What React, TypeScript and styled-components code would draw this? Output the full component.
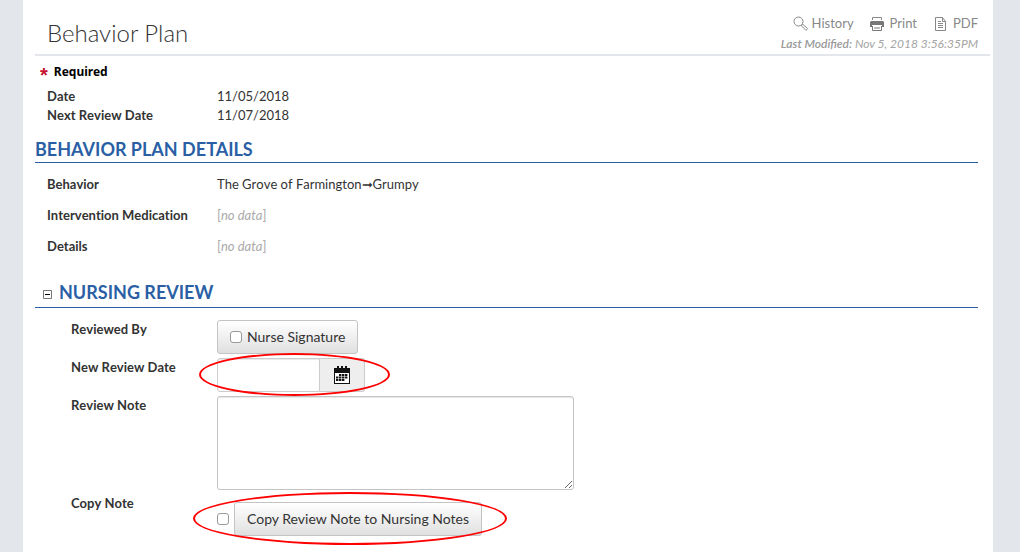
import React from "react";
import styled, { createGlobalStyle } from "styled-components";

const GlobalStyle = createGlobalStyle`
  * { box-sizing: border-box; }
  body {
    margin: 0;
    background: #e3e6eb;
    color: #333;
    font: 13px/19px Lato, "Liberation Sans", sans-serif;
  }
`;

const Page = styled.main`
  margin: 0 27px 0 23px;
  padding: 0 3px 0 12px;
  min-height: 100vh;
  background: #fff;
`;

const Header = styled.header`
  display: flex;
  justify-content: space-between;
  padding: 14px 12px 0;
  border-bottom: 2px solid #e3e6eb;
`;

const Title = styled.h1`
  margin: 0;
  font-size: 24px;
  font-weight: 300;
  line-height: 38px;
`;

const Tools = styled.div`
  display: flex;
  flex-direction: column;
  align-items: flex-end;
  color: #a4a4a4;
`;

const ToolRow = styled.nav`
  display: flex;
  gap: 16px;
`;

const ToolLink = styled.a`
  display: flex;
  align-items: center;
  gap: 4px;
  color: #888;
  text-decoration: none;
  svg { display: block; }
`;

const Modified = styled.div`
  font-size: 12px;
  font-style: italic;
  line-height: 21px;
  b { color: #999; font-weight: 600; }
`;

const Content = styled.div`
  padding-right: 12px;
`;

const Required = styled.p`
  display: flex;
  gap: 6px;
  margin: 0;
  padding: 6px 0 5px 5px;
  color: #000;
  font: bold 12px/20px "Noto Sans", sans-serif;
`;

const Star = styled.span`
  height: 20px;
  color: #c41230;
  font: bold 20px/26px "Liberation Sans", sans-serif;
`;

const List = styled.dl<{ $gap: number }>`
  display: flex;
  flex-direction: column;
  gap: ${(p) => p.$gap}px;
  margin: 0;
  padding-left: 12px;
  font-kerning: none;
  font-variant-ligatures: none;
`;

const Item = styled.div`
  display: flex;
`;

const Term = styled.dt`
  width: 170px;
  font-weight: 700;
`;

const Value = styled.dd`
  margin: 0;
`;

const NoData = styled.span`
  color: #aaa;
`;

const SectionTitle = styled.h2<{ $top: number; $bottom: number }>`
  display: flex;
  align-items: center;
  gap: 7px;
  margin: ${(p) => p.$top}px 0 12px;
  padding-bottom: ${(p) => p.$bottom}px;
  border-bottom: 1px solid #2a5fa5;
  color: #2a5fa5;
  font-size: 18px;
  font-weight: 700;
  line-height: 26px;
  text-transform: uppercase;
`;

const Toggle = styled.button`
  display: flex;
  margin: 4px 0 0 8px;
  padding: 0;
  border: 0;
  background: none;
`;

const Form = styled.form`
  display: flex;
  flex-direction: column;
  gap: 4px;
  padding-left: 36px;
`;

const Field = styled.div`
  display: flex;
  align-items: flex-start;
`;

const FieldLabel = styled.label`
  width: 146px;
  font-weight: 700;
  font-kerning: none;
`;

const Check = styled.input`
  appearance: none;
  width: 12px;
  height: 12px;
  margin: 0;
  border: 1px solid #999;
  border-radius: 3px;
  background: #fff;
`;

const buttonLook = `
  display: flex;
  align-items: center;
  gap: 5px;
  height: 34px;
  padding: 0 12px;
  border: 1px solid #c4c4c4;
  border-radius: 3px;
  background: linear-gradient(#fff, #e0e0e0);
  color: #333;
  font: 14px/20px Lato, "Liberation Sans", sans-serif;
`;

const CheckButton = styled.label`${buttonLook}`;
const PushButton = styled.button`${buttonLook}`;

const Marked = styled.div<{ $top?: number }>`
  position: relative;
  display: flex;
  align-items: center;
  margin-top: ${(p) => p.$top ?? 0}px;
`;

const Ring = styled.span<{ $x: number; $y: number; $right: number }>`
  position: absolute;
  inset: ${(p) => -p.$y}px ${(p) => -p.$right}px ${(p) => 1 - p.$y}px ${(p) => -p.$x}px;
  border: 2px solid #f00;
  border-radius: 50%;
  pointer-events: none;
`;

const DateInput = styled.input`
  width: 103px;
  height: 34px;
  padding: 0 8px;
  border: 1px solid #ccc;
  border-radius: 3px 0 0 3px;
  box-shadow: inset 0 1px 1px #e8e8e8;
  font: inherit;
`;

const DateButton = styled.button`
  display: flex;
  align-items: center;
  justify-content: center;
  width: 45px;
  height: 34px;
  padding: 0;
  border: 1px solid #ccc;
  border-left: 0;
  border-radius: 0 3px 3px 0;
  background: #eee;
`;

const Note = styled.textarea`
  width: 357px;
  height: 94px;
  padding: 8px;
  border: 1px solid #c4c4c4;
  border-radius: 3px;
  box-shadow: inset 0 1px 1px #e8e8e8;
  font: inherit;
`;

const CopyCheck = styled(Check)`
  margin-right: 5px;
`;

const HistoryIcon = () => (
  <svg width="16" height="15" viewBox="-1 0 16 15" fill="none" stroke="#888">
    <circle cx="5.500" cy="5.500" r="4.500" />
    <path d="M8.300 9.700L9.700 8.300L14.300 12.200C14.700 13.100 13.700 14.300 12.700 14Z" />
  </svg>
);

const PrintIcon = () => (
  <svg width="16" height="14" viewBox="0 0 16 14">
    <path d="M2.500 3V.5h9V3" fill="none" stroke="#888" />
    <path d="M1 4h12l1 1v5h-2V8H2v2H0V5z" fill="#777" />
    <path d="M2.500 9v4.500h9V9M4 11h6" fill="none" stroke="#777" />
  </svg>
);

const PdfIcon = () => (
  <svg width="16" height="14" viewBox="-2 0 16 14" fill="none" stroke="#888">
    <path d="M.5.5h7l3 4v9H.5zM7.500.5v4h3M3 4.500h3M3 6.500h5M3 8.500h5M3 10.500h5" />
  </svg>
);

const CalendarIcon = () => (
  <svg width="16" height="18" viewBox="0 0 16 18">
    <path d="M0 2h3V0h2v2h2V0h2v2h2V0h2v2h3v16H0z" fill="#111" />
    <path d="M1 7h14v10H1z" fill="#fff" />
    <path d="M5 9h9M2 11.500h12M2 14h9" stroke="#111" strokeWidth="2" strokeDasharray="2.400 .6" />
  </svg>
);

const MinusIcon = () => (
  <svg width="9" height="9" viewBox="0 0 9 9" fill="none">
    <path d="M.5.5h8v8h-8z" stroke="#777" />
    <path d="M2 4.500h5" stroke="#000" />
  </svg>
);

const Empty = () => <NoData>[<em>no data</em>]</NoData>;

const Row = ({ term, children }: { term: string; children: React.ReactNode }) => (
  <Item>
    <Term>{term}</Term>
    <Value>{children}</Value>
  </Item>
);

export default function App() {
  return (
    <>
      <GlobalStyle />
      <Page>
        <Header>
          <Title>Behavior Plan</Title>
          <Tools>
            <ToolRow>
              <ToolLink href="#history"><HistoryIcon />History</ToolLink>
              <ToolLink href="#print"><PrintIcon />Print</ToolLink>
              <ToolLink href="#pdf"><PdfIcon />PDF</ToolLink>
            </ToolRow>
            <Modified><b>Last Modified:</b> Nov 5, 2018 3:56:35PM</Modified>
          </Tools>
        </Header>
        <Content>
          <Required><Star>*</Star>Required</Required>
          <List $gap={0}>
            <Row term="Date">11/05/2018</Row>
            <Row term="Next Review Date">11/07/2018</Row>
          </List>
          <SectionTitle $top={11} $bottom={0}>Behavior Plan Details</SectionTitle>
          <List $gap={12}>
            <Row term="Behavior">The Grove of Farmington➞Grumpy</Row>
            <Row term="Intervention Medication"><Empty /></Row>
            <Row term="Details"><Empty /></Row>
          </List>
          <SectionTitle $top={23} $bottom={2}>
            <Toggle type="button" aria-label="Collapse section"><MinusIcon /></Toggle>
            Nursing Review
          </SectionTitle>
          <Form>
            <Field>
              <FieldLabel htmlFor="signature">Reviewed By</FieldLabel>
              <CheckButton><Check id="signature" type="checkbox" />Nurse Signature</CheckButton>
            </Field>
            <Field>
              <FieldLabel htmlFor="date">New Review Date</FieldLabel>
              <Marked>
                <DateInput id="date" type="text" />
                <DateButton type="button" aria-label="Choose date"><CalendarIcon /></DateButton>
                <Ring $x={18} $y={5} $right={25} />
              </Marked>
            </Field>
            <Field>
              <FieldLabel htmlFor="note">Review Note</FieldLabel>
              <Note id="note" />
            </Field>
            <Field>
              <FieldLabel htmlFor="copy">Copy Note</FieldLabel>
              <Marked $top={8}>
                <CopyCheck id="copy" type="checkbox" />
                <PushButton type="button">Copy Review Note to Nursing Notes</PushButton>
                <Ring $x={24} $y={10} $right={25} />
              </Marked>
            </Field>
          </Form>
        </Content>
      </Page>
    </>
  );
}
